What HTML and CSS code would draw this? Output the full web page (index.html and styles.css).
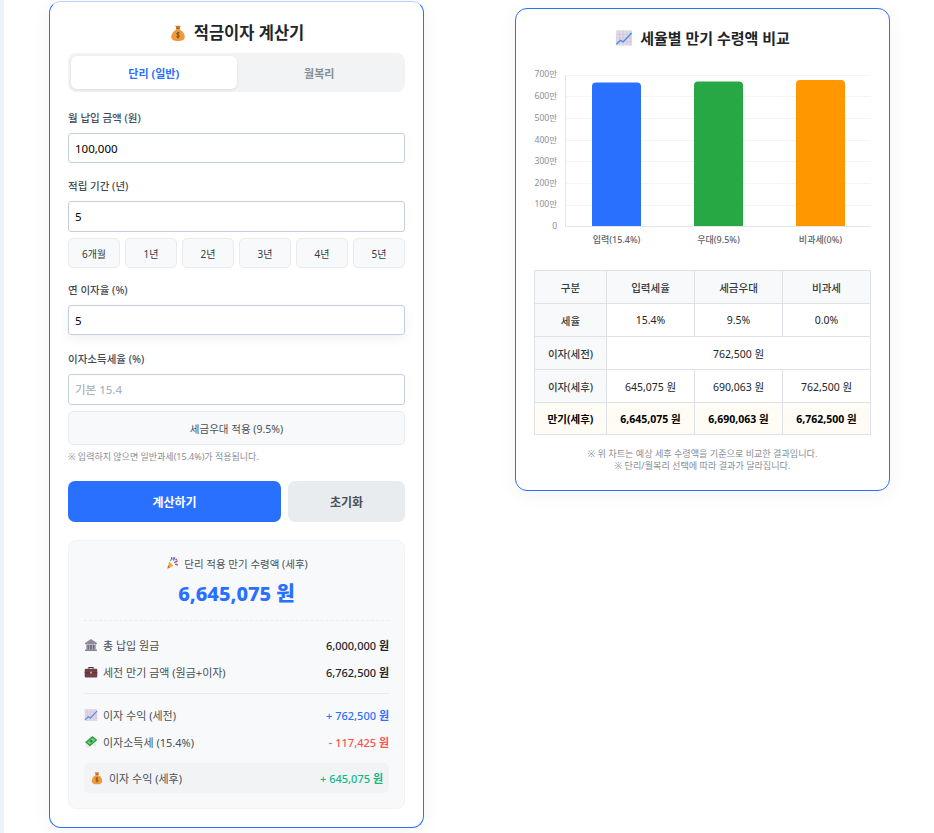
FILE: index.html
```html
<!DOCTYPE html>
<html lang="ko">
<head>
<meta charset="utf-8">
<meta name="viewport" content="width=device-width, initial-scale=1.0">
<title>적금이자 계산기</title>
<link rel="stylesheet" href="styles.css">
</head>
<body>

<svg class="defs" width="0" height="0">
  <defs>
    <symbol id="bag" viewBox="0 0 20 20">
      <path d="M7 1.500c1 .8 2 .8 3 .2 1 .6 2 .5 3-.2l-1.200 3.700h-3.600z" fill="#c9791f"/>
      <rect x="7.600" y="4.600" width="4.800" height="1.500" rx=".7" fill="#8a5a2b"/>
      <path d="M8 6c-3.200 1.800-5.500 5-5.500 8.200C2.500 17.800 5.500 19 10 19s7.500-1.200 7.500-4.800C17.500 11 15.200 7.800 12 6z" fill="#ee9a3a"/>
      <path d="M11.800 10.200c-.5-.6-3-.9-3.200.6-.2 1.700 3.100 1 3 2.800-.1 1.500-2.900 1.200-3.500.5M10 8.800v7.400" fill="none" stroke="#7a4a1c" stroke-width="1.100"/>
    </symbol>
    <symbol id="chart" viewBox="0 0 20 20">
      <rect x="1" y="1.500" width="18" height="17" fill="#e2d9ea"/>
      <path d="M1 6h18M1 10h18M1 14h18M5 2v16M9 2v16M13 2v16M17 2v16" stroke="#c4b6d4" stroke-width=".5"/>
      <path d="M1.500 17l4.500-4.500 3 1.800L18.500 4.500" fill="none" stroke="#3f8fe0" stroke-width="1.500"/>
    </symbol>
    <symbol id="party" viewBox="0 0 20 20">
      <path d="M3 19l3-11 6 6z" fill="#f2b035"/>
      <path d="M4.500 13.500l2.500 2.800-2 1-1.300-1.300z" fill="#d6457c"/>
      <path d="M9 1.500l1 4M14 2l-2 4.500M18 7l-5 2.500M18.500 13l-4-1.500" stroke="#8a56c9" stroke-width="1.800"/>
      <circle cx="12" cy="3" r="1.300" fill="#3f8fe0"/>
      <circle cx="16" cy="5" r="1.300" fill="#e0457a"/>
      <circle cx="8" cy="6" r="1.100" fill="#3fb56b"/>
      <circle cx="16" cy="10" r="1.100" fill="#f2b035"/>
    </symbol>
    <symbol id="bank" viewBox="0 0 20 20">
      <path d="M10 1.500L1.500 7v2h17V7z" fill="#8f8a9c"/>
      <rect x="3" y="9" width="14" height="7.500" fill="#aba7b6"/>
      <rect x="5" y="10" width="2" height="6.500" fill="#6e6a7a"/>
      <rect x="9" y="10" width="2" height="6.500" fill="#5a5666"/>
      <rect x="13" y="10" width="2" height="6.500" fill="#6e6a7a"/>
      <rect x="1.500" y="16.500" width="17" height="2" fill="#7f7b8b"/>
    </symbol>
    <symbol id="case" viewBox="0 0 20 20">
      <path d="M7 5.500V3.500h6v2" fill="none" stroke="#4f2f2f" stroke-width="1.500"/>
      <rect x="1" y="5.500" width="18" height="12.500" rx="1.500" fill="#70404a"/>
      <rect x="1" y="10.500" width="18" height="1" fill="#4f2f35"/>
      <rect x="8.500" y="9.500" width="3" height="2.600" fill="#d8a24a"/>
    </symbol>
    <symbol id="wings" viewBox="0 0 20 20">
      <path d="M1.500 10.500L12 1.500l7 5.500-10.500 9.500z" fill="#2f9a48"/>
      <path d="M4.500 10.500l7.500-6.300 4.200 3-7.500 6.500z" fill="#74d07a"/>
      <circle cx="10.200" cy="9" r="1.800" fill="#2e7d3a"/>
      <path d="M2.500 12.500l5 5-3 1.500-3.500-3.500z" fill="#e6ebf1"/>
      <path d="M14 11l3.500 2-1.500 4-3-2.500z" fill="#dfe4ea"/>
    </symbol>
  </defs>
</svg>

<div class="page">
  <div class="strip"></div>

  <!-- 계산기 -->
  <section class="card calc">
    <h1 class="title"><svg class="emoji big"><use href="#bag"/></svg>적금이자 계산기</h1>

    <div class="tabs">
      <button class="tab active">단리 (일반)</button>
      <button class="tab">월복리</button>
    </div>

    <label class="label first">월 납입 금액 (원)</label>
    <input class="field" value="100,000">

    <label class="label">적립 기간 (년)</label>
    <input class="field tall" value="5">
    <div class="presets">
      <button class="preset">6개월</button>
      <button class="preset">1년</button>
      <button class="preset">2년</button>
      <button class="preset">3년</button>
      <button class="preset">4년</button>
      <button class="preset">5년</button>
    </div>

    <label class="label near">연 이자율 (%)</label>
    <input class="field lifted" value="5">

    <label class="label far">이자소득세율 (%)</label>
    <input class="field tall" placeholder="기본 15.4">
    <button class="taxfree">세금우대 적용 (9.5%)</button>
    <p class="note">※ 입력하지 않으면 일반과세(15.4%)가 적용됩니다.</p>

    <div class="actions">
      <button class="btn primary">계산하기</button>
      <button class="btn reset">초기화</button>
    </div>

    <div class="result">
      <div class="result-title"><svg class="emoji"><use href="#party"/></svg>단리 적용 만기 수령액 (세후)</div>
      <div class="result-amount">6,645,075 원</div>

      <div class="rows dashed">
        <div class="row"><span><svg class="emoji"><use href="#bank"/></svg>총 납입 원금</span><span class="val">6,000,000 <b>원</b></span></div>
        <div class="row"><span><svg class="emoji"><use href="#case"/></svg>세전 만기 금액 (원금+이자)</span><span class="val">6,762,500 <b>원</b></span></div>
      </div>
      <div class="rows solid">
        <div class="row"><span><svg class="emoji"><use href="#chart"/></svg>이자 수익 (세전)</span><span class="val blue">+ 762,500 <b>원</b></span></div>
        <div class="row"><span><svg class="emoji"><use href="#wings"/></svg>이자소득세 (15.4%)</span><span class="val red">- 117,425 <b>원</b></span></div>
      </div>
      <div class="row net"><span><svg class="emoji"><use href="#bag"/></svg>이자 수익 (세후)</span><span class="val green">+ 645,075 <b>원</b></span></div>
    </div>
  </section>

  <!-- 비교 -->
  <section class="card compare">
    <h2 class="title small"><svg class="emoji big"><use href="#chart"/></svg>세율별 만기 수령액 비교</h2>

    <svg class="plot" width="337" height="182" viewBox="534 66 337 182">
      <g class="grid">
        <path d="M565 75.500H871M565 96.500H871M565 118.500H871M565 140.500H871M565 161.500H871M565 183.500H871M565 205.500H871"/>
        <path class="axis" d="M565.500 75V226.500M565 226.500H871"/>
      </g>
      <g class="ticks">
        <text x="557" y="77">700만</text>
        <text x="557" y="99">600만</text>
        <text x="557" y="121">500만</text>
        <text x="557" y="143">400만</text>
        <text x="557" y="164">300만</text>
        <text x="557" y="186">200만</text>
        <text x="557" y="207">100만</text>
        <text x="557" y="229">0</text>
      </g>
      <path d="M592 226V86.500a4 4 0 0 1 4-4h41a4 4 0 0 1 4 4V226z" fill="#2970ff"/>
      <path d="M694 226V85.500a4 4 0 0 1 4-4h41a4 4 0 0 1 4 4V226z" fill="#28a745"/>
      <path d="M796 226V84a4 4 0 0 1 4-4h41a4 4 0 0 1 4 4V226z" fill="#ff9800"/>
      <g class="cats">
        <text x="616.500" y="243">입력(15.4%)</text>
        <text x="718.500" y="243">우대(9.5%)</text>
        <text x="820.500" y="243">비과세(0%)</text>
      </g>
    </svg>

    <table class="compare-table">
      <tr><th>구분</th><th>입력세율</th><th>세금우대</th><th>비과세</th></tr>
      <tr><th>세율</th><td>15.4%</td><td>9.5%</td><td>0.0%</td></tr>
      <tr><th>이자(세전)</th><td colspan="3">762,500 원</td></tr>
      <tr><th>이자(세후)</th><td>645,075 원</td><td>690,063 원</td><td>762,500 원</td></tr>
      <tr class="total"><th>만기(세후)</th><td>6,645,075 원</td><td>6,690,063 원</td><td>6,762,500 원</td></tr>
    </table>

    <p class="foot">※ 위 차트는 예상 세후 수령액을 기준으로 비교한 결과입니다.<br>※ 단리/월복리 선택에 따라 결과가 달라집니다.</p>
  </section>
</div>

</body>
</html>
```

FILE: styles.css
```css
*{box-sizing:border-box;}

html,body{height:100%;}

body{
  margin:0;
  background:#fff;
  color:#212529;
  font-family:"Noto Sans","Noto Sans CJK KR",sans-serif;
  overflow:hidden;
}

.defs{position:absolute;}

.page{
  display:flex;
  align-items:flex-start;
  height:100%;
}

.strip{
  width:4px;
  height:100%;
  background:#edf2f8;
  margin-right:45px;
}

.card{
  width:375px;
  background:#fff;
  border:1px solid #2970ff;
  border-radius:12px;
  padding:0 18px;
  box-shadow:0 4px 20px rgba(0,0,0,.05);
}

.calc{margin-top:1px;height:827px;border-top-color:#b9d0ff;}
.compare{margin-top:8px;margin-left:91px;height:483px;}

.emoji{width:14px;height:14px;margin-right:5px;vertical-align:-2px;}
.emoji.big{width:18px;height:18px;margin-right:7px;vertical-align:-3px;}

.title{
  margin:19px 0 8px;
  height:24px;
  line-height:24px;
  font-size:16.500px;
  font-weight:700;
  text-align:center;
}
.title.small{margin:17px 0 16px;font-size:15px;}

/* tabs */
.tabs{
  display:flex;
  height:39px;
  padding:3px;
  background:#f1f3f5;
  border-radius:8px;
}
.tab{
  flex:1;
  border:none;
  background:none;
  border-radius:6px;
  font:inherit;
  font-size:11px;
  font-weight:700;
  color:#868e96;
}
.tab.active{
  background:#fff;
  color:#2970ff;
  box-shadow:0 1px 3px rgba(0,0,0,.1);
}

/* form */
.label{
  display:block;
  height:16px;
  margin:15px 0 7px;
  line-height:16px;
  font-size:10.500px;
  font-weight:500;
  color:#444b52;
}
.label.first{margin-top:18px;}
.label.near{margin-top:14px;}
.label.far{margin-top:16px;}

.field{
  display:block;
  width:100%;
  height:30px;
  padding:0 6px;
  border:1px solid #c3cfe0;
  border-radius:3px;
  background:#fff;
  font:inherit;
  font-size:11.500px;
  color:#000;
  outline:none;
}
.field::placeholder{color:#adb5bd;font-weight:500;}
.field.tall{height:31px;}
.field.lifted{box-shadow:0 4px 12px rgba(0,0,0,.06);}

.presets{display:flex;gap:5px;margin-top:6px;}
.preset{
  flex:1;
  height:30px;
  padding:0;
  border:1px solid #e9ecef;
  border-radius:5px;
  background:#f8f9fa;
  font:inherit;
  font-size:10px;
  color:#343a40;
}

.taxfree{
  display:block;
  width:100%;
  height:34px;
  margin-top:6px;
  border:1px solid #e9ecef;
  border-radius:5px;
  background:#f8f9fa;
  font:inherit;
  font-size:10.500px;
  color:#495057;
}

.note{
  margin:5px 0 0;
  height:14px;
  line-height:14px;
  font-size:9px;
  color:#868e96;
}

.actions{display:flex;gap:7px;margin-top:17px;}
.btn{
  height:41px;
  border:none;
  border-radius:7px;
  font:inherit;
  font-size:12px;
  font-weight:700;
}
.btn.primary{width:213px;background:#2970ff;color:#fff;}
.btn.reset{flex:1;background:#e9ecef;color:#495057;}

/* result */
.result{
  margin-top:18px;
  height:269px;
  padding:15px 15px 0;
  background:#f8f9fa;
  border:1px solid #f1f3f5;
  border-radius:8px;
}
.result-title{
  height:17px;
  line-height:17px;
  text-align:center;
  font-size:10.500px;
  color:#495057;
}
.result-amount{
  height:30px;
  margin-top:6px;
  line-height:30px;
  text-align:center;
  font-size:20px;
  font-weight:800;
  color:#2970ff;
}
.rows.dashed{margin-top:11px;padding-top:10px;border-top:1px dashed #e9ecef;}
.rows.solid{margin-top:8px;padding-top:7px;border-top:1px solid #e9ecef;}
.row{
  display:flex;
  justify-content:space-between;
  align-items:center;
  height:27px;
  font-size:11px;
  color:#495057;
}
.val{color:#212529;font-weight:500;}
.val b{font-weight:700;}
.blue{color:#2970ff;}
.red{color:#fa5252;}
.green{color:#12b886;}
.row.net{
  height:30px;
  margin-top:8px;
  padding:0 6px;
  background:#f1f3f5;
  border-radius:5px;
}

/* chart */
.plot{display:block;}
.grid path{fill:none;stroke:#f3f4f6;stroke-width:1;}
.grid path.axis{stroke:#e3e5e8;}
.ticks text{font-size:8.500px;fill:#868e96;text-anchor:end;}
.cats text{font-size:9px;font-weight:500;fill:#5c636a;text-anchor:middle;}

/* table */
.compare-table{
  width:337px;
  margin-top:22px;
  border-collapse:collapse;
  table-layout:fixed;
  font-size:10.500px;
}
.compare-table th,.compare-table td{
  height:33px;
  padding:0;
  border:1px solid #dee2e6;
  text-align:center;
}
.compare-table th{font-weight:500;background:#f8f9fa;color:#343a40;}
.compare-table th:first-child{width:72px;}
.compare-table td{color:#212529;}
.compare-table .total th,.compare-table .total td{
  height:32px;
  background:#fffcf5;
  font-weight:700;
  color:#000;
}

.foot{
  margin:13px 0 0;
  line-height:12px;
  text-align:center;
  font-size:9.100px;
  color:#868e96;
}
```
